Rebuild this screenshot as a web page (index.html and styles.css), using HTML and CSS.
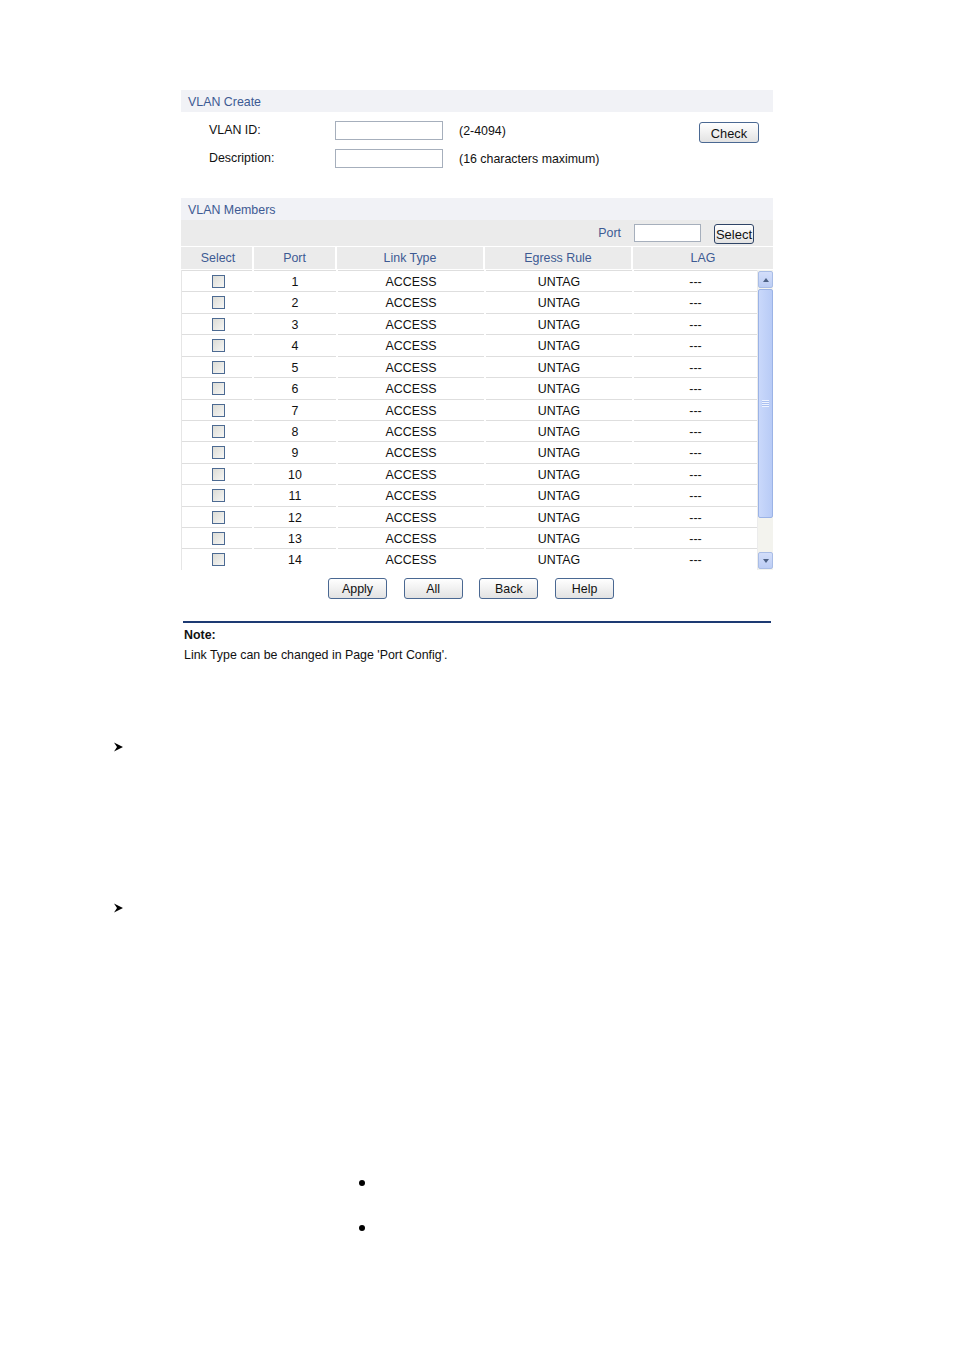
FILE: index.html
```html
<!DOCTYPE html>
<html>
<head>
<meta charset="utf-8">
<link rel="stylesheet" href="styles.css">
</head>
<body>
<div class="panel">
  <div class="bar">VLAN Create</div>
  <div class="create">
    <div class="frow">
      <span class="flabel">VLAN ID:</span>
      <span class="finput"></span>
      <span class="fhint">(2-4094)</span>
      <span class="btn btn-check">Check</span>
    </div>
    <div class="frow">
      <span class="flabel">Description:</span>
      <span class="finput"></span>
      <span class="fhint">(16 characters maximum)</span>
    </div>
  </div>
  <div class="bar">VLAN Members</div>
  <div class="tools">
    <span class="tlabel">Port</span>
    <span class="tinput"></span>
    <span class="btn btn-select">Select</span>
  </div>
  <div class="thead">
    <div class="th">Select</div>
    <div class="th">Port</div>
    <div class="th">Link Type</div>
    <div class="th">Egress Rule</div>
    <div class="th">LAG</div>
  </div>
  <div class="tbody">
    <div class="rows">
      <div class="row"><div class="td"><span class="cb"></span></div><div class="td">1</div><div class="td">ACCESS</div><div class="td">UNTAG</div><div class="td">---</div></div>
      <div class="row"><div class="td"><span class="cb"></span></div><div class="td">2</div><div class="td">ACCESS</div><div class="td">UNTAG</div><div class="td">---</div></div>
      <div class="row"><div class="td"><span class="cb"></span></div><div class="td">3</div><div class="td">ACCESS</div><div class="td">UNTAG</div><div class="td">---</div></div>
      <div class="row"><div class="td"><span class="cb"></span></div><div class="td">4</div><div class="td">ACCESS</div><div class="td">UNTAG</div><div class="td">---</div></div>
      <div class="row"><div class="td"><span class="cb"></span></div><div class="td">5</div><div class="td">ACCESS</div><div class="td">UNTAG</div><div class="td">---</div></div>
      <div class="row"><div class="td"><span class="cb"></span></div><div class="td">6</div><div class="td">ACCESS</div><div class="td">UNTAG</div><div class="td">---</div></div>
      <div class="row"><div class="td"><span class="cb"></span></div><div class="td">7</div><div class="td">ACCESS</div><div class="td">UNTAG</div><div class="td">---</div></div>
      <div class="row"><div class="td"><span class="cb"></span></div><div class="td">8</div><div class="td">ACCESS</div><div class="td">UNTAG</div><div class="td">---</div></div>
      <div class="row"><div class="td"><span class="cb"></span></div><div class="td">9</div><div class="td">ACCESS</div><div class="td">UNTAG</div><div class="td">---</div></div>
      <div class="row"><div class="td"><span class="cb"></span></div><div class="td">10</div><div class="td">ACCESS</div><div class="td">UNTAG</div><div class="td">---</div></div>
      <div class="row"><div class="td"><span class="cb"></span></div><div class="td">11</div><div class="td">ACCESS</div><div class="td">UNTAG</div><div class="td">---</div></div>
      <div class="row"><div class="td"><span class="cb"></span></div><div class="td">12</div><div class="td">ACCESS</div><div class="td">UNTAG</div><div class="td">---</div></div>
      <div class="row"><div class="td"><span class="cb"></span></div><div class="td">13</div><div class="td">ACCESS</div><div class="td">UNTAG</div><div class="td">---</div></div>
      <div class="row"><div class="td"><span class="cb"></span></div><div class="td">14</div><div class="td">ACCESS</div><div class="td">UNTAG</div><div class="td">---</div></div>
    </div>
    <div class="scroll">
      <div class="sbtn"><span class="tri-up"></span></div>
      <div class="thumb"><span class="grip"></span></div>
      <div class="track"></div>
      <div class="sbtn"><span class="tri-down"></span></div>
    </div>
  </div>
  <div class="actions">
    <span class="btn btn-act">Apply</span>
    <span class="btn btn-act">All</span>
    <span class="btn btn-act">Back</span>
    <span class="btn btn-act">Help</span>
  </div>
  <div class="note">
    <div class="note-title">Note:</div>
    <div class="note-text">Link Type can be changed in Page 'Port Config'.</div>
  </div>
</div>
<div class="doc">
  <div class="arrow arrow-1"><svg width="9" height="10" viewBox="0 0 9 10"><polygon points="0,0.5 9,5 0,9.5 3,5" fill="#000"/></svg></div>
  <div class="arrow arrow-2"><svg width="9" height="10" viewBox="0 0 9 10"><polygon points="0,0.5 9,5 0,9.5 3,5" fill="#000"/></svg></div>
  <div class="bullet bullet-1"></div>
  <div class="bullet bullet-2"></div>
</div>
</body>
</html>
```
FILE: styles.css
```css
html, body {
  margin: 0;
  padding: 0;
  background: #fff;
}
body {
  font-family: "Liberation Sans", Arial, sans-serif;
  font-size: 12.4px;
  color: #111;
  height: 1350px;
  overflow: hidden;
}
.panel {
  width: 592px;
  margin-left: 181px;
  padding-top: 90px;
}
.bar {
  height: 22px;
  line-height: 24px;
  padding-left: 7px;
  background: #f1f2f6;
  color: #3d5a93;
}
.create {
  height: 86px;
  padding-top: 9px;
  box-sizing: border-box;
}
.frow {
  display: flex;
  align-items: flex-start;
  height: 28px;
  padding-left: 28px;
}
.flabel {
  width: 126px;
  line-height: 19px;
}
.finput {
  width: 106px;
  height: 17px;
  border: 1px solid #a6afbc;
  background: #fff;
}
.fhint {
  margin-left: 16px;
  line-height: 20px;
}
.btn {
  display: inline-flex;
  align-items: center;
  justify-content: center;
  box-sizing: border-box;
  border: 1px solid #4a6892;
  border-radius: 3px;
  background: linear-gradient(#ffffff, #f1f1f1 50%, #e2e2e2);
  color: #111;
  font-size: 12.4px;
  padding-top: 1px;
}
.btn-check {
  margin-left: auto;
  margin-right: 14px;
  margin-top: 1px;
  width: 60px;
  height: 21px;
  font-size: 12.8px;
}
.tools {
  height: 26px;
  background: #ebebeb;
  display: flex;
  justify-content: flex-end;
  align-items: flex-start;
  padding-top: 4px;
  box-sizing: border-box;
}
.tlabel {
  color: #3d5a93;
  line-height: 19px;
}
.tinput {
  margin-left: 13px;
  width: 65px;
  height: 16px;
  border: 1px solid #a6afbc;
  background: #fff;
}
.btn-select {
  margin-left: 13px;
  margin-right: 19px;
  width: 40px;
  height: 20px;
  font-size: 13px;
  padding: 1px 0 0 0;
  border-color: #2f4466;
}
.thead {
  margin-top: 1px;
  display: grid;
  grid-template-columns: 71px 81px 146px 146px 140px;
  column-gap: 2px;
  height: 22px;
  background: #fff;
}
.th {
  background: #ebebeb;
  color: #3d5a93;
  text-align: center;
  line-height: 22px;
}
.th:first-child {
  padding-left: 3px;
}
.tbody {
  margin-top: 1px;
  display: flex;
  height: 300px;
}
.rows {
  width: 576px;
  border-left: 1px solid #e6e6e6;
  box-sizing: border-box;
}
.row {
  display: grid;
  grid-template-columns: 70px 82px 146px 146px 123px;
  column-gap: 2px;
  height: 21.43px;
}
.td {
  border-top: 1px solid #dedede;
  text-align: center;
  line-height: 20px;
  padding-top: 1px;
  display: flex;
  align-items: center;
  justify-content: center;
}
.cb {
  width: 11px;
  height: 11px;
  border: 1px solid #4c6a92;
  background: linear-gradient(135deg, #dcdcd6, #f6f6f4);
  margin-left: 2px;
  margin-top: -1px;
}
.scroll {
  width: 16px;
  display: flex;
  flex-direction: column;
  background: #f3f3ee;
  border-left: 1px solid #ececec;
  box-sizing: border-box;
  padding: 1px 0 1px 0;
}
.sbtn {
  height: 17px;
  box-sizing: border-box;
  border: 1px solid #a9bde6;
  border-radius: 2px;
  background: linear-gradient(#d3defa, #bccdf4);
  display: flex;
  align-items: center;
  justify-content: center;
}
.tri-up {
  width: 0;
  height: 0;
  border-left: 3px solid transparent;
  border-right: 3px solid transparent;
  border-bottom: 4px solid #4d6185;
}
.tri-down {
  width: 0;
  height: 0;
  border-left: 3px solid transparent;
  border-right: 3px solid transparent;
  border-top: 4px solid #4d6185;
}
.thumb {
  margin-top: 1px;
  height: 229px;
  box-sizing: border-box;
  border: 1px solid #9bb3e6;
  border-radius: 2px;
  background: linear-gradient(90deg, #c9d8fb, #b8cbf6);
  display: flex;
  align-items: center;
  justify-content: center;
}
.grip {
  width: 7px;
  height: 7px;
  background: repeating-linear-gradient(#eef3ff 0 1px, #a9bff0 1px 2px);
}
.track {
  flex: 1;
}
.actions {
  display: flex;
  gap: 16.7px;
  padding-left: 147px;
  margin-top: 8px;
}
.btn-act {
  width: 59px;
  height: 21px;
}
.note {
  margin-top: 22px;
  margin-left: 2px;
  width: 588px;
  border-top: 2px solid #1d3a73;
  padding-top: 2px;
}
.note-title {
  font-weight: bold;
  line-height: 20px;
  padding-left: 1px;
}
.note-text {
  line-height: 20px;
  padding-left: 1px;
}
.doc {
  position: relative;
}
.arrow {
  margin-left: 114px;
  height: 10px;
  line-height: 0;
}
.arrow-1 {
  margin-top: 77px;
}
.arrow-2 {
  margin-top: 151px;
}
.bullet {
  width: 6px;
  height: 6px;
  border-radius: 50%;
  background: #000;
  margin-left: 359px;
}
.bullet-1 {
  margin-top: 267px;
}
.bullet-2 {
  margin-top: 39px;
}
```
